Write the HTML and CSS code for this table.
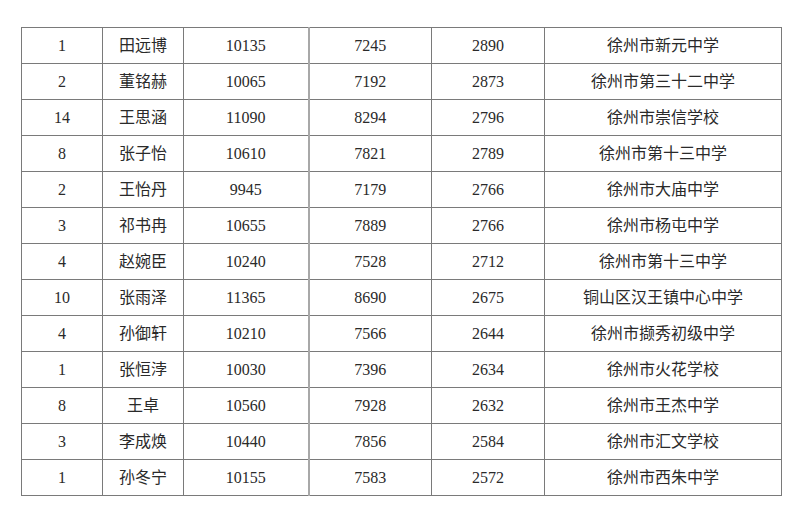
FILE: index.html
```html
<!DOCTYPE html>
<html lang="zh">
<head>
<meta charset="utf-8">
<link rel="stylesheet" href="styles.css">
</head>
<body>
<table class="scores">
<colgroup>
<col class="c1"><col class="c2"><col class="c3"><col class="c4"><col class="c5"><col class="c6">
</colgroup>
<tbody>
<tr><td>1</td><td>田远博</td><td>10135</td><td class="gap">7245</td><td>2890</td><td>徐州市新元中学</td></tr>
<tr><td>2</td><td>董铭赫</td><td>10065</td><td class="gap">7192</td><td>2873</td><td>徐州市第三十二中学</td></tr>
<tr><td>14</td><td>王思涵</td><td>11090</td><td class="gap">8294</td><td>2796</td><td>徐州市崇信学校</td></tr>
<tr><td>8</td><td>张子怡</td><td>10610</td><td class="gap">7821</td><td>2789</td><td>徐州市第十三中学</td></tr>
<tr><td>2</td><td>王怡丹</td><td>9945</td><td class="gap">7179</td><td>2766</td><td>徐州市大庙中学</td></tr>
<tr><td>3</td><td>祁书冉</td><td>10655</td><td class="gap">7889</td><td>2766</td><td>徐州市杨屯中学</td></tr>
<tr><td>4</td><td>赵婉臣</td><td>10240</td><td class="gap">7528</td><td>2712</td><td>徐州市第十三中学</td></tr>
<tr><td>10</td><td>张雨泽</td><td>11365</td><td class="gap">8690</td><td>2675</td><td>铜山区汉王镇中心中学</td></tr>
<tr><td>4</td><td>孙御轩</td><td>10210</td><td class="gap">7566</td><td>2644</td><td>徐州市撷秀初级中学</td></tr>
<tr><td>1</td><td>张恒浡</td><td>10030</td><td class="gap">7396</td><td>2634</td><td>徐州市火花学校</td></tr>
<tr><td>8</td><td>王卓</td><td>10560</td><td class="gap">7928</td><td>2632</td><td>徐州市王杰中学</td></tr>
<tr><td>3</td><td>李成焕</td><td>10440</td><td class="gap">7856</td><td>2584</td><td>徐州市汇文学校</td></tr>
<tr><td>1</td><td>孙冬宁</td><td>10155</td><td class="gap">7583</td><td>2572</td><td>徐州市西朱中学</td></tr>
</tbody>
</table>
</body>
</html>
```
FILE: styles.css
```css
html, body {
  margin: 0;
  padding: 0;
  background: #ffffff;
}
body {
  padding: 27px 0 0 21px;
}
.scores {
  border-collapse: collapse;
  table-layout: fixed;
  width: 760px;
  font-family: "Liberation Serif", "Noto Sans CJK SC", serif;
  font-size: 16px;
  color: #2a2a2a;
}
.c1 { width: 81px; }
.c2 { width: 81px; }
.c3 { width: 125px; }
.c4 { width: 123px; }
.c5 { width: 113px; }
.c6 { width: 237px; }
.scores td {
  border: 1px solid #7a7a7a;
  height: 35px;
  padding: 0;
  text-align: center;
  vertical-align: middle;
  line-height: 20px;
}
.scores td.gap {
  border-left: 2px solid #a8a8a8;
}
```
